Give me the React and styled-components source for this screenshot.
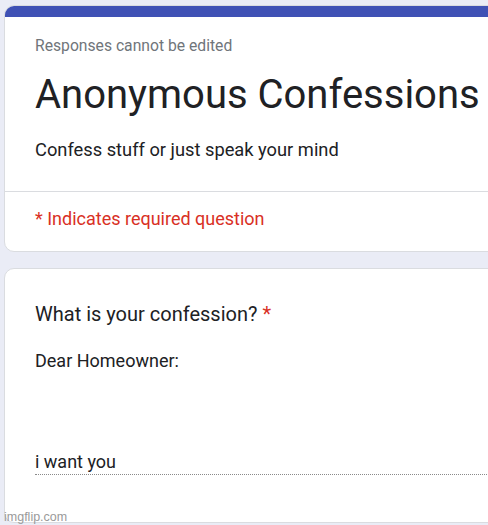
import styled, { createGlobalStyle } from "styled-components";

const GlobalStyle = createGlobalStyle`
    html, body {
        margin: 0;
        padding: 0;
        background: #eaecf6;
        overflow: hidden;
    }
    body {
        font-family: Roboto, "Liberation Sans", sans-serif;
        color: #202124;
    }
`

const App = () => {
    return(
        <Page>
            <GlobalStyle />
            <Card>
                <TopBar />
                <Header>
                    <Note>Responses cannot be edited</Note>
                    <Title>Anonymous Confessions</Title>
                    <Description>Confess stuff or just speak your mind</Description>
                </Header>
                <Divider />
                <Required>* Indicates required question</Required>
            </Card>
            <Card $pad={47}>
                <Question>
                    What is your confession? <Star>*</Star>
                </Question>
                <Answer>
                    <AnswerText>{"Dear Homeowner:\n\n\n\ni want you"}</AnswerText>
                </Answer>
            </Card>
            <Watermark>imgflip.com</Watermark>
        </Page>
    );
};

export default App;

const Page = styled.div`
    display: flex;
    flex-direction: column;
    align-items: flex-start;
    gap: 16px;
    padding: 5px 0 0 4px;
    height: 525px;
    box-sizing: border-box;
    position: relative;
`
const Card = styled.div`
    width: 720px;
    background: #fff;
    border: 1px solid #dadce0;
    border-radius: 10px;
    overflow: hidden;
    box-sizing: border-box;
    padding-bottom: ${(p) => p.$pad || 0}px;
`
const TopBar = styled.div`
    height: 12px;
    margin: -1px -1px 0 -1px;
    background: #3f51b5;
`
const Header = styled.div`
    display: flex;
    flex-direction: column;
    padding: 19px 31px 29px 30px;
`
const Note = styled.div`
    font-size: 15.7px;
    line-height: 20px;
    color: #70757a;
`
const Title = styled.div`
    margin-top: 13px;
    font-size: 40px;
    line-height: 52px;
    color: #202124;
    white-space: nowrap;
`
const Description = styled.div`
    margin-top: 17px;
    font-size: 18.3px;
    line-height: 24px;
    color: #202124;
`
const Divider = styled.div`
    height: 1px;
    background: #dadce0;
`
const Required = styled.div`
    padding: 16px 30px 21px 30px;
    font-size: 18px;
    line-height: 22px;
    color: #d93025;
`
const Question = styled.div`
    padding: 31px 30px 0 30px;
    font-size: 20px;
    line-height: 28px;
    color: #202124;
`
const Star = styled.span`
    color: #d93025;
`
const Answer = styled.div`
    margin: 20px 0 0 30px;
    border-bottom: 1px dotted #8a8a8a;
`
const AnswerText = styled.div`
    white-space: pre-wrap;
    font-size: 18px;
    line-height: 25.25px;
    color: #202124;
`
const Watermark = styled.div`
    position: absolute;
    left: 4px;
    bottom: 1px;
    font-family: "Liberation Sans", Arial, sans-serif;
    font-size: 12.5px;
    color: #9a9a9a;
`
